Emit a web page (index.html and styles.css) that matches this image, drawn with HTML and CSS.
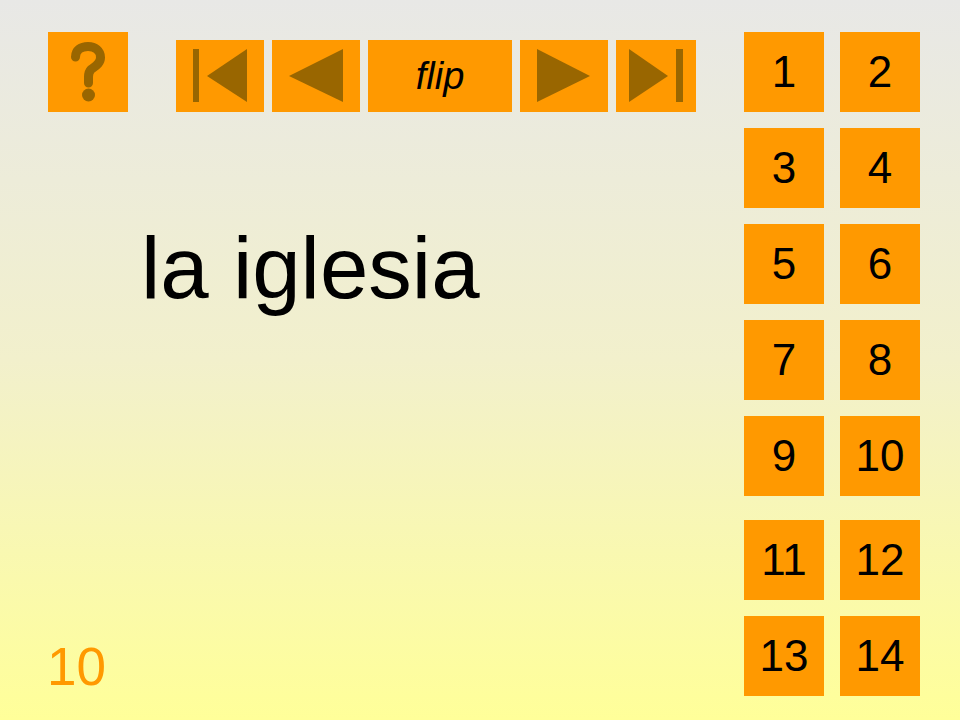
FILE: index.html
```html
<!DOCTYPE html>
<html lang="es">
<head>
    <meta charset="UTF-8">
    <title>la iglesia</title>
    <link rel="stylesheet" href="styles.css">
</head>
<body>
    <div class="slide">
        <div class="left">
            <div class="toolbar">
                <div class="btn help">
                    <svg width="80" height="80" viewBox="0 0 80 80">
                        <path d="M27.5 25 C27.5 18 33 14.5 40 14.5 C47 14.5 52.5 18.5 52.5 25.5 C52.5 32 46.5 34.5 43 37.5 C41 39.5 40.5 42 40.5 45 L40.5 51" fill="none" stroke="#996600" stroke-width="9" stroke-linecap="round"/>
                        <circle cx="40.5" cy="63" r="6.5" fill="#996600"/>
                    </svg>
                </div>
                <div class="nav">
                    <div class="btn nav-btn">
                        <svg width="88" height="72" viewBox="0 0 88 72">
                            <rect x="17" y="9" width="6" height="53" fill="#996600"/>
                            <polygon points="71,9 71,62 31,36" fill="#996600"/>
                        </svg>
                    </div>
                    <div class="btn nav-btn">
                        <svg width="88" height="72" viewBox="0 0 88 72">
                            <polygon points="71,9 71,62 17,36" fill="#996600"/>
                        </svg>
                    </div>
                    <div class="btn flip">flip</div>
                    <div class="btn nav-btn">
                        <svg width="88" height="72" viewBox="0 0 88 72">
                            <polygon points="17,9 17,62 70,36" fill="#996600"/>
                        </svg>
                    </div>
                    <div class="btn nav-btn last">
                        <svg width="80" height="72" viewBox="0 0 80 72">
                            <polygon points="13,9 13,62 52,36" fill="#996600"/>
                            <rect x="60" y="9" width="7" height="53" fill="#996600"/>
                        </svg>
                    </div>
                </div>
            </div>
            <div class="word">la iglesia</div>
            <div class="page-num">10</div>
        </div>
        <div class="grid">
            <div class="btn num">1</div>
            <div class="btn num">2</div>
            <div class="btn num">3</div>
            <div class="btn num">4</div>
            <div class="btn num">5</div>
            <div class="btn num">6</div>
            <div class="btn num">7</div>
            <div class="btn num">8</div>
            <div class="btn num">9</div>
            <div class="btn num">10</div>
            <div class="btn num low">11</div>
            <div class="btn num low">12</div>
            <div class="btn num">13</div>
            <div class="btn num">14</div>
        </div>
    </div>
</body>
</html>
```

FILE: styles.css
```css
body {
    margin: 0;
    height: 720px;
    overflow: hidden;
    font-family: "Liberation Sans", Arial, sans-serif;
    background: linear-gradient(#e8e8e6, #f2f0cc 50%, #ffff99);
}
.slide {
    display: flex;
    height: 100%;
    box-sizing: border-box;
    padding: 32px 40px 24px 48px;
    gap: 48px;
}
.btn {
    background: #ff9900;
    display: flex;
    justify-content: center;
    align-items: center;
}
.left {
    width: 648px;
    display: flex;
    flex-direction: column;
}
.toolbar {
    display: flex;
    align-items: flex-end;
    gap: 48px;
}
.help {
    width: 80px;
    height: 80px;
}
.nav {
    display: flex;
    gap: 8px;
}
.nav-btn {
    width: 88px;
    height: 72px;
}
.nav-btn.last {
    width: 80px;
}
.flip {
    width: 144px;
    height: 72px;
    font-style: italic;
    font-size: 38px;
    color: #000;
}
.word {
    font-size: 87px;
    margin: 112px 0 0 93px;
    line-height: 1;
}
.page-num {
    margin-top: auto;
    color: #ff9900;
    font-size: 53px;
    line-height: 1;
    margin-bottom: 3px;
    margin-left: -1px;
}
.grid {
    display: grid;
    grid-template-columns: 80px 80px;
    grid-template-rows: repeat(5, 80px) 88px 80px;
    gap: 16px;
}
.num {
    height: 80px;
    font-size: 44px;
}
.low {
    align-self: end;
}
```
